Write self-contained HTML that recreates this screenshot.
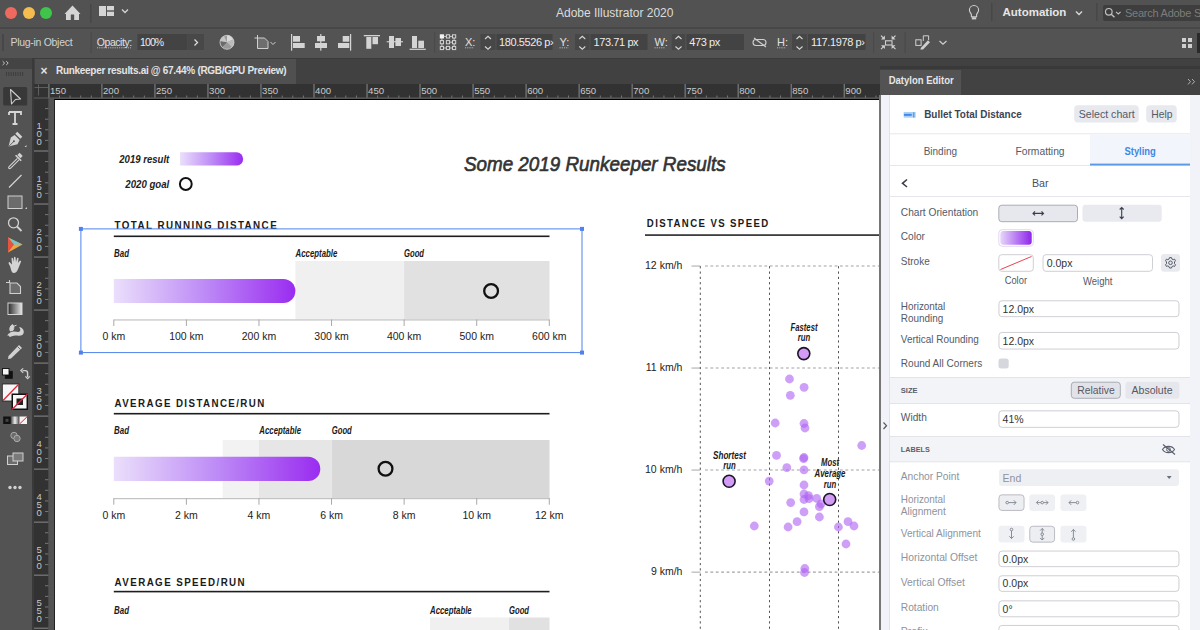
<!DOCTYPE html>
<html><head><meta charset="utf-8">
<style>
*{margin:0;padding:0;box-sizing:border-box}
html,body{width:1200px;height:630px;overflow:hidden;background:#535353;font-family:"Liberation Sans",sans-serif}
.a{position:absolute}
.t{position:absolute;white-space:nowrap;line-height:1}
svg{position:absolute;overflow:visible}
</style></head><body>
<!-- title bar -->
<div class="a" style="left:0;top:0;width:1200px;height:27px;background:#525252"></div>
<div class="a" style="left:0;top:27px;width:1200px;height:1.6px;background:#474747"></div>
<!-- control bar -->
<div class="a" style="left:0;top:28.6px;width:1200px;height:29px;background:#535353"></div>
<div class="a" style="left:0;top:57.5px;width:1200px;height:1.5px;background:#3b3b3b"></div>

<!-- ===== title bar content ===== -->
<div class="a" style="left:5px;top:7px;width:12px;height:12px;border-radius:50%;background:#ee6a5f"></div>
<div class="a" style="left:22.5px;top:7px;width:12px;height:12px;border-radius:50%;background:#f5bd4f"></div>
<div class="a" style="left:40px;top:7px;width:12px;height:12px;border-radius:50%;background:#3fc54a"></div>
<svg style="left:0;top:0" width="1200" height="28">
 <path d="M64.5 14 L72.5 5.5 L80.5 14 L79 14 L79 20 L74.2 20 L74.2 14.5 L70.8 14.5 L70.8 20 L66 20 L66 14 Z" fill="#d4d4d4"/>
 <rect x="90" y="4" width="1.5" height="19" fill="#474747"/>
 <rect x="99" y="6" width="7" height="10" fill="#d4d4d4"/>
 <rect x="107" y="6" width="7" height="4.3" fill="#d4d4d4"/>
 <rect x="107" y="11.7" width="7" height="4.3" fill="#d4d4d4"/>
 <path d="M122 9.5 L125 12.5 L128 9.5" stroke="#d4d4d4" stroke-width="1.3" fill="none"/>
 <path d="M974 5.5 a4.6 4.6 0 0 1 4.6 4.6 c0 2 -1.6 3 -2 4.6 v2 h-5.2 v-2 c-0.4 -1.6 -2 -2.6 -2 -4.6 a4.6 4.6 0 0 1 4.6 -4.6z" stroke="#cfcfcf" stroke-width="1.1" fill="none"/>
 <rect x="971.8" y="17.2" width="4.4" height="2.2" fill="#cfcfcf"/>
 <rect x="991" y="3" width="1.5" height="18" fill="#474747"/>
 <path d="M1076 11.5 L1079 14.5 L1082 11.5" stroke="#d8d8d8" stroke-width="1.4" fill="none"/>
 <rect x="1096" y="3" width="1.5" height="18" fill="#474747"/>
 <rect x="1103" y="5" width="100" height="16" rx="2" fill="#3e3e3e"/>
 <circle cx="1108.8" cy="11.8" r="3.3" stroke="#c0c0c0" stroke-width="1.2" fill="none"/>
 <path d="M1111.2 14.2 L1114.5 17.3" stroke="#c0c0c0" stroke-width="1.4"/>
 <path d="M1116 11.8 L1118.3 14 L1120.6 11.8" stroke="#c0c0c0" stroke-width="1.1" fill="none"/>
</svg>
<div class="t" style="left:556px;top:7px;font-size:12px;color:#dcdcdc">Adobe Illustrator 2020</div>
<div class="t" style="left:1002.5px;top:6.5px;font-size:11.5px;font-weight:bold;color:#e6e6e6">Automation</div>
<div class="t" style="left:1125px;top:7.5px;font-size:11px;color:#7d7d7d;letter-spacing:-0.25px">Search Adobe Stock</div>

<!-- ===== control bar content ===== -->
<svg style="left:0;top:28px" width="1200" height="30">
 <rect x="2" y="6" width="2" height="17" fill="#474747"/>
 <rect x="90.5" y="4" width="1.2" height="21" fill="#4a4a4a"/>
 <path d="M97 19.8 H131" stroke="#bdbdbd" stroke-width="0.9" stroke-dasharray="1.2 1"/>
 <rect x="137.5" y="6" width="50" height="16" fill="#434343"/>
 <rect x="188" y="6" width="16" height="16" fill="#484848"/>
 <path d="M194.5 11.5 L197.5 14.5 L194.5 17.5" stroke="#dcdcdc" stroke-width="1.3" fill="none"/>
 
 <circle cx="227" cy="14.3" r="7" fill="#9a9a9a"/>
 <path d="M227 14.3 L227 7.3 A7 7 0 0 1 233.3 11.5 Z" fill="#d8d8d8"/>
 <path d="M227 14.3 L233.3 11.5 A7 7 0 0 1 232 19.3 Z" fill="#bcbcbc"/>
 <path d="M227 14.3 L222 19.3 A7 7 0 0 1 220.2 13 Z" fill="#6a6a6a"/>
 <path d="M227 14.3 L220.2 13 A7 7 0 0 1 224 8 Z" fill="#c4c4c4"/>
 <circle cx="227" cy="14.3" r="7" fill="none" stroke="#cfcfcf" stroke-width="0.8"/>
 
 <path d="M257.5 10 H264.5 L268 13.5 V20.5 H257.5 Z" fill="#6e6e6e" stroke="#d0d0d0" stroke-width="1"/>
 <path d="M254.5 10 H257.5 M257.5 7 V10" stroke="#d0d0d0" stroke-width="1"/>
 <path d="M270.5 14 L273 16.5 L275.5 14" stroke="#d0d0d0" stroke-width="1" fill="none"/>
 
 <g fill="#d4d4d4">
 <rect x="291" y="6" width="1.2" height="16.7"/><rect x="293" y="8" width="7" height="5.7"/><rect x="293" y="15" width="11.7" height="5"/>
 <rect x="320.2" y="6" width="1.2" height="16.7"/><rect x="317" y="8" width="8" height="5.3"/><rect x="315" y="15" width="12" height="5"/>
 <rect x="350" y="6" width="1.2" height="16.7"/><rect x="342.7" y="8" width="6.6" height="5.7"/><rect x="338" y="15" width="11.3" height="5"/>
 <rect x="363.8" y="7" width="16.2" height="1.3"/><rect x="366.3" y="9" width="5" height="11.8"/><rect x="372.5" y="9" width="5.5" height="7.2"/>
 <rect x="386.7" y="13.2" width="16.3" height="1.1"/><rect x="389" y="8" width="5" height="12"/><rect x="395.4" y="10" width="5.6" height="8"/>
 <rect x="409.6" y="20.7" width="16.2" height="1.2"/><rect x="412" y="8" width="5" height="12"/><rect x="418.3" y="12.7" width="5.7" height="7.3"/>
 </g>
 <rect x="434" y="4" width="1.2" height="21" fill="#4a4a4a"/>
 <rect x="439.8" y="6.3" width="4.2" height="4.2" fill="#f2f2f2"/><rect x="446.4" y="6.8" width="3.2" height="3.2" fill="none" stroke="#d4d4d4" stroke-width="1"/><rect x="452.5" y="6.8" width="3.2" height="3.2" fill="none" stroke="#d4d4d4" stroke-width="1"/><rect x="440.3" y="12.6" width="3.2" height="3.2" fill="none" stroke="#d4d4d4" stroke-width="1"/><rect x="446.4" y="12.6" width="3.2" height="3.2" fill="none" stroke="#d4d4d4" stroke-width="1"/><rect x="452.5" y="12.6" width="3.2" height="3.2" fill="none" stroke="#d4d4d4" stroke-width="1"/><rect x="440.3" y="18.4" width="3.2" height="3.2" fill="none" stroke="#d4d4d4" stroke-width="1"/><rect x="446.4" y="18.4" width="3.2" height="3.2" fill="none" stroke="#d4d4d4" stroke-width="1"/><rect x="452.5" y="18.4" width="3.2" height="3.2" fill="none" stroke="#d4d4d4" stroke-width="1"/><path d="M443.5 8.4 H446.4 M449.6 8.4 H452.5 M449.6 14.2 H452.5 M443.5 20 H446.4 M449.6 20 H452.5 M441.9 10 V12.6 M441.9 15.8 V18.4 M454.1 10 V12.6 M454.1 15.8 V18.4" stroke="#d4d4d4" stroke-width="0.9"/>
 <path d="M465 19.8 H474 M559.5 19.8 H568.5 M654.5 19.8 H665.5 M777 19.8 H786" stroke="#bdbdbd" stroke-width="0.9" stroke-dasharray="1.2 1"/>
 <rect x="480.5" y="6" width="15" height="16" fill="#474747"/>
 <rect x="496.5" y="6" width="56" height="16" fill="#434343"/>
 <rect x="575" y="6" width="14.5" height="16" fill="#474747"/>
 <rect x="590.5" y="6" width="57" height="16" fill="#434343"/>
 <rect x="671.7" y="6" width="13.5" height="16" fill="#474747"/>
 <rect x="686.5" y="6" width="57.5" height="16" fill="#434343"/>
 <rect x="792" y="6" width="15" height="16" fill="#474747"/>
 <rect x="808" y="6" width="57.5" height="16" fill="#434343"/>
 <g stroke="#d6d6d6" stroke-width="1.1" fill="none">
  <path d="M485 11 L488 8.3 L491 11 M485 18.5 L488 21.2 L491 18.5"/>
  <path d="M579.3 11 L582.3 8.3 L585.3 11 M579.3 18.5 L582.3 21.2 L585.3 18.5"/>
  <path d="M675.5 11 L678.5 8.3 L681.5 11 M675.5 18.5 L678.5 21.2 L681.5 18.5"/>
  <path d="M796.5 11 L799.5 8.3 L802.5 11 M796.5 18.5 L799.5 21.2 L802.5 18.5"/>
 </g>
 <g stroke="#cfcfcf" stroke-width="1.1" fill="none">
  <path d="M757 11.5 h6 a3 3 0 0 1 0 6 h-1.5 M762 17.5 h-6 a3 3 0 0 1 0 -6 h1.5"/>
  <path d="M754 10 L766 19"/>
 </g>
 <rect x="873" y="4" width="1.2" height="21" fill="#4a4a4a"/>
 <rect x="885.5" y="12.8" width="6.5" height="4.2" fill="none" stroke="#d0d0d0" stroke-width="1.1"/>
 <g fill="#d0d0d0">
  <path d="M884.9 11.5 L884.9 7.6 L881 11.5 Z M891.6 11.5 L891.6 7.6 L895.5 11.5 Z"/>
  <path d="M884.9 17.2 L881 17.2 L884.9 21.1 Z M891.6 17.2 L895.5 17.2 L891.6 21.1 Z"/>
 </g>
 <path d="M881 7.6 L883.5 10.1 M895.5 7.6 L893 10.1 M881 21.1 L883.5 18.6 M895.5 21.1 L893 18.6" stroke="#d0d0d0" stroke-width="1.2"/>
 <rect x="904.5" y="4" width="1.2" height="21" fill="#4a4a4a"/>
 <g stroke="#d0d0d0" stroke-width="1" fill="none">
  <rect x="915.8" y="11.8" width="5.3" height="5.6"/>
  <path d="M923.3 13 V7.8 H928.6 V12"/>
 </g>
 <path d="M921 19.8 L928 12.3 L930 14.3 L923 21.5 L920.3 21.6 Z" fill="#d0d0d0"/>
 <path d="M939.5 13 L943 16.2 L946.5 13" stroke="#d0d0d0" stroke-width="1.2" fill="none"/>
 <g fill="#cfcfcf"><rect x="1182" y="10" width="4" height="4"/><rect x="1188" y="10" width="4" height="4"/><rect x="1182" y="16" width="4" height="4"/><rect x="1188" y="16" width="4" height="4"/></g>
 <rect x="1197" y="5" width="3" height="20" fill="#2a2a2a"/>
</svg>
<div class="t" style="left:10.5px;top:36.5px;font-size:10.5px;color:#d2d2d2;letter-spacing:-0.3px">Plug-in Object</div>
<div class="t" style="left:96.8px;top:36.5px;font-size:10.5px;color:#e0e0e0;letter-spacing:-0.45px">Opacity:</div>
<div class="t" style="left:140px;top:37px;font-size:10.5px;color:#ececec;letter-spacing:-0.9px">100%</div>
<div class="t" style="left:465px;top:37px;font-size:11px;color:#e0e0e0">X:</div>
<div class="t" style="left:559.5px;top:37px;font-size:11px;color:#e0e0e0">Y:</div>
<div class="t" style="left:654.5px;top:37px;font-size:11px;color:#e0e0e0">W:</div>
<div class="t" style="left:777px;top:37px;font-size:11px;color:#e0e0e0">H:</div>
<div class="t" style="left:499px;top:37px;font-size:11px;color:#ececec;letter-spacing:-0.4px">180.5526 p›</div>
<div class="t" style="left:593.5px;top:37px;font-size:11px;color:#ececec;letter-spacing:-0.4px">173.71 px</div>
<div class="t" style="left:689.3px;top:37px;font-size:11px;color:#ececec;letter-spacing:-0.4px">473 px</div>
<div class="t" style="left:811px;top:37px;font-size:11px;color:#ececec;letter-spacing:-0.4px">117.1978 p›</div>

<!-- tab bar -->
<div class="a" style="left:34px;top:59px;width:1166px;height:25px;background:#414141"></div>
<div class="a" style="left:35px;top:59px;width:261px;height:25px;background:#505050"></div>
<!-- toolbar -->
<div class="a" style="left:0;top:58px;width:32px;height:572px;background:#535353"></div>
<div class="a" style="left:0;top:58px;width:32px;height:11px;background:#444"></div>
<div class="a" style="left:32px;top:58px;width:2px;height:572px;background:#3a3a3a"></div>

<div class="t" style="left:40.5px;top:64.5px;font-size:12px;font-weight:bold;color:#e0e0e0">×</div>
<div class="t" style="left:56px;top:66px;font-size:10px;font-weight:bold;color:#e4e4e4;letter-spacing:-0.3px">Runkeeper results.ai @ 67.44% (RGB/GPU Preview)</div>

<!-- toolbar icons -->
<svg style="left:0;top:0" width="34" height="630">
 <path d="M2.6 61.2 L4.6 63.1 L2.6 65 M6.2 61.2 L8.2 63.1 L6.2 65" stroke="#c4c4c4" stroke-width="1" fill="none"/>
 <g fill="#3e3e3e"><rect x="6" y="72" width="1" height="4"/><rect x="8.3" y="72" width="1" height="4"/><rect x="10.6" y="72" width="1" height="4"/><rect x="12.9" y="72" width="1" height="4"/><rect x="15.2" y="72" width="1" height="4"/><rect x="17.5" y="72" width="1" height="4"/><rect x="19.8" y="72" width="1" height="4"/><rect x="22.1" y="72" width="1" height="4"/></g>
 <rect x="3.2" y="87" width="24" height="18.5" rx="1.5" fill="#383838"/>
 <path d="M10.5 89.5 L20.5 99 L15.5 99.5 L11.5 104 Z" stroke="#cfcfcf" stroke-width="1.1" fill="none" stroke-linejoin="round"/>
 <path d="M9 112 H21 V115 M9 112 V115 M15 112 V124 M12.5 124 H17.5" stroke="#d6d6d6" stroke-width="1.8" fill="none"/>
 <path d="M17.3 131.8 L22.3 136.8 L20.3 138.8 L15.3 133.8 Z" fill="#d2d2d2"/>
 <path d="M14.6 135 L19.6 140 L17.5 144.3 L8.6 146.6 L10.8 137.6 Z" fill="#d2d2d2"/>
 <path d="M8.9 146.3 L13.2 142" stroke="#535353" stroke-width="0.9"/><circle cx="13.9" cy="141.3" r="1" fill="#535353"/>
 <path d="M24.5 147 L26.5 145 L26.5 147 Z" fill="#cfcfcf"/>
 <path d="M19.6 152.8 L22.7 155.9 L20.4 158.2 L17.3 155.1 Z" fill="#d2d2d2"/>
 <path d="M15.6 155.2 L21.2 160.8" stroke="#d2d2d2" stroke-width="1.6"/>
 <path d="M17.4 158.3 L9.6 166.1 C8.6 167.1 8.4 168 8.9 168.4 C9.4 168.9 10.3 168.6 11.2 167.7 L19 159.9" stroke="#d2d2d2" stroke-width="1.1" fill="none"/>
 <path d="M9 187.5 L21.5 175" stroke="#d2d2d2" stroke-width="1.3"/>
 <rect x="8" y="196" width="14" height="12.5" fill="#6c6c6c" stroke="#d0d0d0" stroke-width="1"/>
 <path d="M25 209 L27 207 L27 209 Z" fill="#cfcfcf"/>
 <circle cx="13.5" cy="222.8" r="5" stroke="#d2d2d2" stroke-width="1.3" fill="none"/>
 <path d="M17 226.5 L21.5 231" stroke="#d2d2d2" stroke-width="1.8"/>
 <path d="M8 237.5 L22.5 244.5 L8 252.5 Z" fill="#f0a640"/>
 <path d="M8 237.5 L22.5 244.5 L14 244.5 Z" fill="#6cc6d6"/>
 <path d="M8 237.5 L14 244.5 L8 252.5 Z" fill="#e45440"/>
 <path d="M10 266 C8 263 8.5 262 9.5 262 L12 264.5 L11.5 258.5 C11.5 257.5 13 257.5 13 258.5 L13.5 262 L14 257.5 C14 256.5 15.5 256.5 15.5 257.5 L16 262 L17 258.5 C17.2 257.5 18.7 257.7 18.5 258.8 L18 263 L19.5 261 C20.2 260.2 21.5 260.8 21 261.8 L18.5 268 C17.5 271 16 273 13.5 273 C11.5 273 10.8 268.5 10 266 Z" fill="#d4d4d4"/>
 <path d="M6 282.5 H10 M9.5 280 V283 M10 283 H17 L20.5 286.5 V293.5 H10 Z" stroke="#d0d0d0" stroke-width="1.1" fill="#6c6c6c"/>
 <defs><linearGradient id="tg" x1="0" x2="1"><stop offset="0" stop-color="#2a2a2a"/><stop offset="1" stop-color="#e8e8e8"/></linearGradient></defs>
 <rect x="8" y="303" width="14" height="11.5" fill="url(#tg)" stroke="#d6d6d6" stroke-width="1"/>
 <path d="M8 335 C9.5 332.5 11.5 331.5 14 331.5 C16.5 331.5 18.3 332.8 19.8 331.3 C20.8 330.3 20.2 328.5 19 327.3 C21.5 327.2 24 329.3 23.8 332.2 C23.5 335 20.8 336.3 17.3 335.6 C14.8 335.1 12.3 335.6 9.8 337 Z" fill="#d2d2d2"/>
 <path d="M10.2 331 C9.2 328.5 10.3 325.6 12.6 324.6 C13.9 325.8 14.4 328 13 330.3 Z M13 326.5 L16.5 325.2 M7.8 335.5 L9 333.5" fill="#d2d2d2" stroke="#d2d2d2" stroke-width="1"/>
 <path d="M19 345 L22 348 L11 358.5 L8 359 L8.5 356 Z" fill="#d2d2d2"/>
 <path d="M17.5 346.5 L20.5 349.5" stroke="#535353" stroke-width="0.8"/>
 <rect x="5.3" y="371.3" width="7" height="7" fill="#111" stroke="#111" stroke-width="0.8"/>
 <rect x="2.5" y="368.5" width="6.5" height="6.5" fill="#f4f4f4" stroke="#111" stroke-width="0.9"/>
 <path d="M22.5 370.6 H25.3 Q27.6 370.6 27.6 372.9 V377" stroke="#d0d0d0" stroke-width="1.4" fill="none"/>
 <path d="M23.2 368.4 L20.8 370.6 L23.2 372.8 M25.4 376.3 L27.6 378.7 L29.8 376.3" stroke="#d0d0d0" stroke-width="1.2" fill="none"/>
 <rect x="2.3" y="384" width="16.5" height="17" fill="#f6f6f6" stroke="#222" stroke-width="0.8"/>
 <path d="M3 400.5 L18.5 384.5" stroke="#e2233a" stroke-width="1.3"/>
 <rect x="11.5" y="393.5" width="16.5" height="16.5" fill="#111"/>
 <rect x="13" y="395" width="13.5" height="13.5" fill="#f6f6f6"/>
 <rect x="16.5" y="398.5" width="6.5" height="6.5" fill="#222"/>
 <path d="M12 409.5 L27.5 394" stroke="#e2233a" stroke-width="1.3"/>
 <rect x="3.2" y="416.5" width="7.5" height="7.5" fill="#111"/><rect x="5.5" y="418.8" width="3" height="3" fill="#444"/>
 <defs><linearGradient id="tg2" x1="0" x2="1"><stop offset="0" stop-color="#555"/><stop offset="0.5" stop-color="#eee"/><stop offset="1" stop-color="#666"/></linearGradient></defs>
 <rect x="11.2" y="416.5" width="7.5" height="7.5" fill="url(#tg2)"/>
 <rect x="19.5" y="416.5" width="7.5" height="7.5" fill="#f4f4f4"/>
 <path d="M19.8 423.8 L27 416.8" stroke="#e2233a" stroke-width="1"/>
 <circle cx="14" cy="435.5" r="3.2" stroke="#aaa" stroke-width="1" fill="#6a6a6a"/><circle cx="17" cy="438.5" r="3.2" stroke="#aaa" stroke-width="1" fill="#777"/>
 <rect x="7.5" y="456" width="10" height="8.5" fill="#6c6c6c" stroke="#d0d0d0" stroke-width="1"/>
 <rect x="13" y="453" width="10" height="8" fill="#7a7a7a" stroke="#d0d0d0" stroke-width="1"/>
 <circle cx="10" cy="487.5" r="1.7" fill="#d0d0d0"/><circle cx="15" cy="487.5" r="1.7" fill="#d0d0d0"/><circle cx="20" cy="487.5" r="1.7" fill="#d0d0d0"/>
</svg>

<!-- rulers -->
<div class="a" style="left:34px;top:84px;width:846px;height:14px;background:#323232"></div>
<div class="a" style="left:34px;top:84px;width:15px;height:546px;background:#323232"></div>
<!-- ruler content -->
<svg style="left:0;top:0" width="1200" height="630"><rect x="48.40" y="84" width="1" height="14" fill="#8a8a8a"/><rect x="59.00" y="95.5" width="1" height="2.5" fill="#777"/><rect x="69.61" y="95.5" width="1" height="2.5" fill="#777"/><rect x="80.21" y="95.5" width="1" height="2.5" fill="#777"/><rect x="90.82" y="95.5" width="1" height="2.5" fill="#777"/><rect x="101.42" y="84" width="1" height="14" fill="#8a8a8a"/><rect x="112.02" y="95.5" width="1" height="2.5" fill="#777"/><rect x="122.63" y="95.5" width="1" height="2.5" fill="#777"/><rect x="133.23" y="95.5" width="1" height="2.5" fill="#777"/><rect x="143.84" y="95.5" width="1" height="2.5" fill="#777"/><rect x="154.44" y="84" width="1" height="14" fill="#8a8a8a"/><rect x="165.04" y="95.5" width="1" height="2.5" fill="#777"/><rect x="175.65" y="95.5" width="1" height="2.5" fill="#777"/><rect x="186.25" y="95.5" width="1" height="2.5" fill="#777"/><rect x="196.86" y="95.5" width="1" height="2.5" fill="#777"/><rect x="207.46" y="84" width="1" height="14" fill="#8a8a8a"/><rect x="218.06" y="95.5" width="1" height="2.5" fill="#777"/><rect x="228.67" y="95.5" width="1" height="2.5" fill="#777"/><rect x="239.27" y="95.5" width="1" height="2.5" fill="#777"/><rect x="249.88" y="95.5" width="1" height="2.5" fill="#777"/><rect x="260.48" y="84" width="1" height="14" fill="#8a8a8a"/><rect x="271.08" y="95.5" width="1" height="2.5" fill="#777"/><rect x="281.69" y="95.5" width="1" height="2.5" fill="#777"/><rect x="292.29" y="95.5" width="1" height="2.5" fill="#777"/><rect x="302.90" y="95.5" width="1" height="2.5" fill="#777"/><rect x="313.50" y="84" width="1" height="14" fill="#8a8a8a"/><rect x="324.10" y="95.5" width="1" height="2.5" fill="#777"/><rect x="334.71" y="95.5" width="1" height="2.5" fill="#777"/><rect x="345.31" y="95.5" width="1" height="2.5" fill="#777"/><rect x="355.92" y="95.5" width="1" height="2.5" fill="#777"/><rect x="366.52" y="84" width="1" height="14" fill="#8a8a8a"/><rect x="377.12" y="95.5" width="1" height="2.5" fill="#777"/><rect x="387.73" y="95.5" width="1" height="2.5" fill="#777"/><rect x="398.33" y="95.5" width="1" height="2.5" fill="#777"/><rect x="408.94" y="95.5" width="1" height="2.5" fill="#777"/><rect x="419.54" y="84" width="1" height="14" fill="#8a8a8a"/><rect x="430.14" y="95.5" width="1" height="2.5" fill="#777"/><rect x="440.75" y="95.5" width="1" height="2.5" fill="#777"/><rect x="451.35" y="95.5" width="1" height="2.5" fill="#777"/><rect x="461.96" y="95.5" width="1" height="2.5" fill="#777"/><rect x="472.56" y="84" width="1" height="14" fill="#8a8a8a"/><rect x="483.16" y="95.5" width="1" height="2.5" fill="#777"/><rect x="493.77" y="95.5" width="1" height="2.5" fill="#777"/><rect x="504.37" y="95.5" width="1" height="2.5" fill="#777"/><rect x="514.98" y="95.5" width="1" height="2.5" fill="#777"/><rect x="525.58" y="84" width="1" height="14" fill="#8a8a8a"/><rect x="536.18" y="95.5" width="1" height="2.5" fill="#777"/><rect x="546.79" y="95.5" width="1" height="2.5" fill="#777"/><rect x="557.39" y="95.5" width="1" height="2.5" fill="#777"/><rect x="568.00" y="95.5" width="1" height="2.5" fill="#777"/><rect x="578.60" y="84" width="1" height="14" fill="#8a8a8a"/><rect x="589.20" y="95.5" width="1" height="2.5" fill="#777"/><rect x="599.81" y="95.5" width="1" height="2.5" fill="#777"/><rect x="610.41" y="95.5" width="1" height="2.5" fill="#777"/><rect x="621.02" y="95.5" width="1" height="2.5" fill="#777"/><rect x="631.62" y="84" width="1" height="14" fill="#8a8a8a"/><rect x="642.22" y="95.5" width="1" height="2.5" fill="#777"/><rect x="652.83" y="95.5" width="1" height="2.5" fill="#777"/><rect x="663.43" y="95.5" width="1" height="2.5" fill="#777"/><rect x="674.04" y="95.5" width="1" height="2.5" fill="#777"/><rect x="684.64" y="84" width="1" height="14" fill="#8a8a8a"/><rect x="695.24" y="95.5" width="1" height="2.5" fill="#777"/><rect x="705.85" y="95.5" width="1" height="2.5" fill="#777"/><rect x="716.45" y="95.5" width="1" height="2.5" fill="#777"/><rect x="727.06" y="95.5" width="1" height="2.5" fill="#777"/><rect x="737.66" y="84" width="1" height="14" fill="#8a8a8a"/><rect x="748.26" y="95.5" width="1" height="2.5" fill="#777"/><rect x="758.87" y="95.5" width="1" height="2.5" fill="#777"/><rect x="769.47" y="95.5" width="1" height="2.5" fill="#777"/><rect x="780.08" y="95.5" width="1" height="2.5" fill="#777"/><rect x="790.68" y="84" width="1" height="14" fill="#8a8a8a"/><rect x="801.28" y="95.5" width="1" height="2.5" fill="#777"/><rect x="811.89" y="95.5" width="1" height="2.5" fill="#777"/><rect x="822.49" y="95.5" width="1" height="2.5" fill="#777"/><rect x="833.10" y="95.5" width="1" height="2.5" fill="#777"/><rect x="843.70" y="84" width="1" height="14" fill="#8a8a8a"/><rect x="854.30" y="95.5" width="1" height="2.5" fill="#777"/><rect x="864.91" y="95.5" width="1" height="2.5" fill="#777"/><rect x="875.51" y="95.5" width="1" height="2.5" fill="#777"/><rect x="45" y="108.08" width="3.5" height="1" fill="#777"/><rect x="45" y="118.69" width="3.5" height="1" fill="#777"/><rect x="45" y="129.29" width="3.5" height="1" fill="#777"/><rect x="45" y="139.90" width="3.5" height="1" fill="#777"/><rect x="34" y="150.50" width="14.5" height="1" fill="#8a8a8a"/><rect x="45" y="161.10" width="3.5" height="1" fill="#777"/><rect x="45" y="171.71" width="3.5" height="1" fill="#777"/><rect x="45" y="182.31" width="3.5" height="1" fill="#777"/><rect x="45" y="192.92" width="3.5" height="1" fill="#777"/><rect x="34" y="203.52" width="14.5" height="1" fill="#8a8a8a"/><rect x="45" y="214.12" width="3.5" height="1" fill="#777"/><rect x="45" y="224.73" width="3.5" height="1" fill="#777"/><rect x="45" y="235.33" width="3.5" height="1" fill="#777"/><rect x="45" y="245.94" width="3.5" height="1" fill="#777"/><rect x="34" y="256.54" width="14.5" height="1" fill="#8a8a8a"/><rect x="45" y="267.14" width="3.5" height="1" fill="#777"/><rect x="45" y="277.75" width="3.5" height="1" fill="#777"/><rect x="45" y="288.35" width="3.5" height="1" fill="#777"/><rect x="45" y="298.96" width="3.5" height="1" fill="#777"/><rect x="34" y="309.56" width="14.5" height="1" fill="#8a8a8a"/><rect x="45" y="320.16" width="3.5" height="1" fill="#777"/><rect x="45" y="330.77" width="3.5" height="1" fill="#777"/><rect x="45" y="341.37" width="3.5" height="1" fill="#777"/><rect x="45" y="351.98" width="3.5" height="1" fill="#777"/><rect x="34" y="362.58" width="14.5" height="1" fill="#8a8a8a"/><rect x="45" y="373.18" width="3.5" height="1" fill="#777"/><rect x="45" y="383.79" width="3.5" height="1" fill="#777"/><rect x="45" y="394.39" width="3.5" height="1" fill="#777"/><rect x="45" y="405.00" width="3.5" height="1" fill="#777"/><rect x="34" y="415.60" width="14.5" height="1" fill="#8a8a8a"/><rect x="45" y="426.20" width="3.5" height="1" fill="#777"/><rect x="45" y="436.81" width="3.5" height="1" fill="#777"/><rect x="45" y="447.41" width="3.5" height="1" fill="#777"/><rect x="45" y="458.02" width="3.5" height="1" fill="#777"/><rect x="34" y="468.62" width="14.5" height="1" fill="#8a8a8a"/><rect x="45" y="479.22" width="3.5" height="1" fill="#777"/><rect x="45" y="489.83" width="3.5" height="1" fill="#777"/><rect x="45" y="500.43" width="3.5" height="1" fill="#777"/><rect x="45" y="511.04" width="3.5" height="1" fill="#777"/><rect x="34" y="521.64" width="14.5" height="1" fill="#8a8a8a"/><rect x="45" y="532.24" width="3.5" height="1" fill="#777"/><rect x="45" y="542.85" width="3.5" height="1" fill="#777"/><rect x="45" y="553.45" width="3.5" height="1" fill="#777"/><rect x="45" y="564.06" width="3.5" height="1" fill="#777"/><rect x="34" y="574.66" width="14.5" height="1" fill="#8a8a8a"/><rect x="45" y="585.26" width="3.5" height="1" fill="#777"/><rect x="45" y="595.87" width="3.5" height="1" fill="#777"/><rect x="45" y="606.47" width="3.5" height="1" fill="#777"/><rect x="45" y="617.08" width="3.5" height="1" fill="#777"/><rect x="34" y="627.68" width="14.5" height="1" fill="#8a8a8a"/><rect x="48.5" y="98" width="1" height="532" fill="#5e5e5e"/><rect x="34" y="97.5" width="846" height="1" fill="#5e5e5e"/></svg><div class="t" style="left:50.00px;top:86.4px;font-size:9.6px;color:#cacaca">150</div><div class="t" style="left:103.02px;top:86.4px;font-size:9.6px;color:#cacaca">200</div><div class="t" style="left:156.04px;top:86.4px;font-size:9.6px;color:#cacaca">250</div><div class="t" style="left:209.06px;top:86.4px;font-size:9.6px;color:#cacaca">300</div><div class="t" style="left:262.08px;top:86.4px;font-size:9.6px;color:#cacaca">350</div><div class="t" style="left:315.10px;top:86.4px;font-size:9.6px;color:#cacaca">400</div><div class="t" style="left:368.12px;top:86.4px;font-size:9.6px;color:#cacaca">450</div><div class="t" style="left:421.14px;top:86.4px;font-size:9.6px;color:#cacaca">500</div><div class="t" style="left:474.16px;top:86.4px;font-size:9.6px;color:#cacaca">550</div><div class="t" style="left:527.18px;top:86.4px;font-size:9.6px;color:#cacaca">600</div><div class="t" style="left:580.20px;top:86.4px;font-size:9.6px;color:#cacaca">650</div><div class="t" style="left:633.22px;top:86.4px;font-size:9.6px;color:#cacaca">700</div><div class="t" style="left:686.24px;top:86.4px;font-size:9.6px;color:#cacaca">750</div><div class="t" style="left:739.26px;top:86.4px;font-size:9.6px;color:#cacaca">800</div><div class="t" style="left:792.28px;top:86.4px;font-size:9.6px;color:#cacaca">850</div><div class="t" style="left:845.30px;top:86.4px;font-size:9.6px;color:#cacaca">900</div>
<div class="t" style="left:36.6px;top:120.70px;font-size:9.5px;color:#c8c8c8">1</div><div class="t" style="left:36.6px;top:128.90px;font-size:9.5px;color:#c8c8c8">0</div><div class="t" style="left:36.6px;top:137.10px;font-size:9.5px;color:#c8c8c8">0</div><div class="t" style="left:36.6px;top:173.72px;font-size:9.5px;color:#c8c8c8">1</div><div class="t" style="left:36.6px;top:181.92px;font-size:9.5px;color:#c8c8c8">5</div><div class="t" style="left:36.6px;top:190.12px;font-size:9.5px;color:#c8c8c8">0</div><div class="t" style="left:36.6px;top:226.74px;font-size:9.5px;color:#c8c8c8">2</div><div class="t" style="left:36.6px;top:234.94px;font-size:9.5px;color:#c8c8c8">0</div><div class="t" style="left:36.6px;top:243.14px;font-size:9.5px;color:#c8c8c8">0</div><div class="t" style="left:36.6px;top:279.76px;font-size:9.5px;color:#c8c8c8">2</div><div class="t" style="left:36.6px;top:287.96px;font-size:9.5px;color:#c8c8c8">5</div><div class="t" style="left:36.6px;top:296.16px;font-size:9.5px;color:#c8c8c8">0</div><div class="t" style="left:36.6px;top:332.78px;font-size:9.5px;color:#c8c8c8">3</div><div class="t" style="left:36.6px;top:340.98px;font-size:9.5px;color:#c8c8c8">0</div><div class="t" style="left:36.6px;top:349.18px;font-size:9.5px;color:#c8c8c8">0</div><div class="t" style="left:36.6px;top:385.80px;font-size:9.5px;color:#c8c8c8">3</div><div class="t" style="left:36.6px;top:394.00px;font-size:9.5px;color:#c8c8c8">5</div><div class="t" style="left:36.6px;top:402.20px;font-size:9.5px;color:#c8c8c8">0</div><div class="t" style="left:36.6px;top:438.82px;font-size:9.5px;color:#c8c8c8">4</div><div class="t" style="left:36.6px;top:447.02px;font-size:9.5px;color:#c8c8c8">0</div><div class="t" style="left:36.6px;top:455.22px;font-size:9.5px;color:#c8c8c8">0</div><div class="t" style="left:36.6px;top:491.84px;font-size:9.5px;color:#c8c8c8">4</div><div class="t" style="left:36.6px;top:500.04px;font-size:9.5px;color:#c8c8c8">5</div><div class="t" style="left:36.6px;top:508.24px;font-size:9.5px;color:#c8c8c8">0</div><div class="t" style="left:36.6px;top:544.86px;font-size:9.5px;color:#c8c8c8">5</div><div class="t" style="left:36.6px;top:553.06px;font-size:9.5px;color:#c8c8c8">0</div><div class="t" style="left:36.6px;top:561.26px;font-size:9.5px;color:#c8c8c8">0</div><div class="t" style="left:36.6px;top:597.88px;font-size:9.5px;color:#c8c8c8">5</div><div class="t" style="left:36.6px;top:606.08px;font-size:9.5px;color:#c8c8c8">5</div><div class="t" style="left:36.6px;top:614.28px;font-size:9.5px;color:#c8c8c8">0</div><div class="t" style="left:36.6px;top:650.90px;font-size:9.5px;color:#c8c8c8">6</div><div class="t" style="left:36.6px;top:659.10px;font-size:9.5px;color:#c8c8c8">0</div><div class="t" style="left:36.6px;top:667.30px;font-size:9.5px;color:#c8c8c8">0</div>
<svg style="left:0;top:0" width="60" height="100"><rect x="38.2" y="84.5" width="0.8" height="11" fill="#6a6a6a"/><rect x="34.5" y="87.2" width="13.5" height="0.8" fill="#6a6a6a"/></svg>
<!-- canvas -->
<div class="a" style="left:49px;top:98px;width:831px;height:532px;background:#535353"></div>
<div class="a" style="left:54px;top:99px;width:826px;height:531px;background:#fff;border-top:1px solid #000;border-left:1px solid #222"></div>
<!-- artboard content -->
<svg style="left:0;top:0" width="1200" height="630" font-family="Liberation Sans"><defs>
<linearGradient id="bg1" x1="0" x2="1"><stop offset="0" stop-color="#ebdffb"/><stop offset="0.5" stop-color="#bd8bf6"/><stop offset="1" stop-color="#9a2cf0"/></linearGradient>
<clipPath id="abclip"><rect x="55" y="100" width="825" height="530"/></clipPath>
</defs><g clip-path="url(#abclip)"><text x="119.3" y="163.3" font-size="10.5" font-weight="bold" font-style="italic" fill="#222" text-anchor="start" textLength="50" lengthAdjust="spacingAndGlyphs">2019 result</text><path d="M180 152.3 H236.5 A6.65 6.65 0 0 1 236.5 165.6 H180 Z" fill="url(#bg1)"/><text x="125.3" y="188" font-size="10.5" font-weight="bold" font-style="italic" fill="#222" text-anchor="start" textLength="44" lengthAdjust="spacingAndGlyphs">2020 goal</text><circle cx="185.8" cy="184" r="5.9" fill="none" stroke="#111" stroke-width="2"/><text x="463.9" y="170.7" font-size="20.5" font-weight="normal" font-style="italic" fill="#333" text-anchor="start" textLength="261.8" lengthAdjust="spacingAndGlyphs" stroke="#333" stroke-width="0.65">Some 2019 Runkeeper Results</text><text x="114.5" y="228.9" font-size="11" font-weight="bold" font-style="normal" fill="#1a1a1a" text-anchor="start" textLength="163.6" lengthAdjust="spacingAndGlyphs" letter-spacing="1.6">TOTAL RUNNING DISTANCE</text><rect x="113.8" y="235.5" width="435.7" height="1.6" fill="#1e1e1e"/><text x="114" y="256.5" font-size="10.3" font-weight="bold" font-style="italic" fill="#1a1a1a" text-anchor="start" textLength="15" lengthAdjust="spacingAndGlyphs">Bad</text><text x="295.6" y="256.5" font-size="10.3" font-weight="bold" font-style="italic" fill="#1a1a1a" text-anchor="start" textLength="41.7" lengthAdjust="spacingAndGlyphs">Acceptable</text><text x="404" y="256.5" font-size="10.3" font-weight="bold" font-style="italic" fill="#1a1a1a" text-anchor="start" textLength="20" lengthAdjust="spacingAndGlyphs">Good</text><rect x="295.4" y="261" width="108.70" height="58.50" fill="#f0f0f0"/><rect x="404.1" y="261" width="145.40" height="58.50" fill="#e1e1e1"/><path d="M113.8 279 H283.40 A12.00 12.00 0 0 1 283.40 303 H113.8 Z" fill="url(#bg1)"/><circle cx="491.1" cy="291" r="6.9" fill="none" stroke="#111" stroke-width="2.3"/><rect x="113.8" y="319.40" width="435.7" height="1.1" fill="#bdbdbd"/><rect x="113.30" y="319.50" width="1" height="6.5" fill="#a8a8a8"/><text x="113.80" y="340.30" font-size="10.5" font-weight="normal" font-style="normal" fill="#222" text-anchor="middle">0 km</text><rect x="185.88" y="319.50" width="1" height="6.5" fill="#a8a8a8"/><text x="186.38" y="340.30" font-size="10.5" font-weight="normal" font-style="normal" fill="#222" text-anchor="middle">100 km</text><rect x="258.46" y="319.50" width="1" height="6.5" fill="#a8a8a8"/><text x="258.96" y="340.30" font-size="10.5" font-weight="normal" font-style="normal" fill="#222" text-anchor="middle">200 km</text><rect x="331.04" y="319.50" width="1" height="6.5" fill="#a8a8a8"/><text x="331.54" y="340.30" font-size="10.5" font-weight="normal" font-style="normal" fill="#222" text-anchor="middle">300 km</text><rect x="403.62" y="319.50" width="1" height="6.5" fill="#a8a8a8"/><text x="404.12" y="340.30" font-size="10.5" font-weight="normal" font-style="normal" fill="#222" text-anchor="middle">400 km</text><rect x="476.20" y="319.50" width="1" height="6.5" fill="#a8a8a8"/><text x="476.70" y="340.30" font-size="10.5" font-weight="normal" font-style="normal" fill="#222" text-anchor="middle">500 km</text><rect x="548.78" y="319.50" width="1" height="6.5" fill="#a8a8a8"/><text x="549.28" y="340.30" font-size="10.5" font-weight="normal" font-style="normal" fill="#222" text-anchor="middle">600 km</text><text x="114.5" y="407.1" font-size="11" font-weight="bold" font-style="normal" fill="#1a1a1a" text-anchor="start" textLength="151.2" lengthAdjust="spacingAndGlyphs" letter-spacing="1.6">AVERAGE DISTANCE/RUN</text><rect x="113.8" y="412.9" width="435.7" height="1.6" fill="#1e1e1e"/><text x="114" y="434.4" font-size="10.3" font-weight="bold" font-style="italic" fill="#1a1a1a" text-anchor="start" textLength="15" lengthAdjust="spacingAndGlyphs">Bad</text><text x="259.3" y="434.4" font-size="10.3" font-weight="bold" font-style="italic" fill="#1a1a1a" text-anchor="start" textLength="41.7" lengthAdjust="spacingAndGlyphs">Acceptable</text><text x="331.8" y="434.4" font-size="10.3" font-weight="bold" font-style="italic" fill="#1a1a1a" text-anchor="start" textLength="20" lengthAdjust="spacingAndGlyphs">Good</text><rect x="222.7" y="440" width="36.20" height="58.20" fill="#f2f2f2"/><rect x="258.9" y="440" width="72.90" height="58.20" fill="#e6e6e6"/><rect x="331.8" y="440" width="217.70" height="58.20" fill="#d8d8d8"/><path d="M113.8 456.8 H308.20 A12.10 12.10 0 0 1 308.20 481 H113.8 Z" fill="url(#bg1)"/><circle cx="385.5" cy="468.8" r="6.9" fill="none" stroke="#111" stroke-width="2.3"/><rect x="113.8" y="498.10" width="435.7" height="1.1" fill="#bdbdbd"/><rect x="113.30" y="498.20" width="1" height="6.5" fill="#a8a8a8"/><text x="113.80" y="519.00" font-size="10.5" font-weight="normal" font-style="normal" fill="#222" text-anchor="middle">0 km</text><rect x="185.88" y="498.20" width="1" height="6.5" fill="#a8a8a8"/><text x="186.38" y="519.00" font-size="10.5" font-weight="normal" font-style="normal" fill="#222" text-anchor="middle">2 km</text><rect x="258.46" y="498.20" width="1" height="6.5" fill="#a8a8a8"/><text x="258.96" y="519.00" font-size="10.5" font-weight="normal" font-style="normal" fill="#222" text-anchor="middle">4 km</text><rect x="331.04" y="498.20" width="1" height="6.5" fill="#a8a8a8"/><text x="331.54" y="519.00" font-size="10.5" font-weight="normal" font-style="normal" fill="#222" text-anchor="middle">6 km</text><rect x="403.62" y="498.20" width="1" height="6.5" fill="#a8a8a8"/><text x="404.12" y="519.00" font-size="10.5" font-weight="normal" font-style="normal" fill="#222" text-anchor="middle">8 km</text><rect x="476.20" y="498.20" width="1" height="6.5" fill="#a8a8a8"/><text x="476.70" y="519.00" font-size="10.5" font-weight="normal" font-style="normal" fill="#222" text-anchor="middle">10 km</text><rect x="548.78" y="498.20" width="1" height="6.5" fill="#a8a8a8"/><text x="549.28" y="519.00" font-size="10.5" font-weight="normal" font-style="normal" fill="#222" text-anchor="middle">12 km</text><text x="114.5" y="585.8" font-size="11" font-weight="bold" font-style="normal" fill="#1a1a1a" text-anchor="start" textLength="131.6" lengthAdjust="spacingAndGlyphs" letter-spacing="1.6">AVERAGE SPEED/RUN</text><rect x="113.8" y="590.8" width="435.7" height="1.6" fill="#1e1e1e"/><text x="114" y="614" font-size="10.3" font-weight="bold" font-style="italic" fill="#1a1a1a" text-anchor="start" textLength="15" lengthAdjust="spacingAndGlyphs">Bad</text><text x="430" y="614" font-size="10.3" font-weight="bold" font-style="italic" fill="#1a1a1a" text-anchor="start" textLength="41.7" lengthAdjust="spacingAndGlyphs">Acceptable</text><text x="509" y="614" font-size="10.3" font-weight="bold" font-style="italic" fill="#1a1a1a" text-anchor="start" textLength="20" lengthAdjust="spacingAndGlyphs">Good</text><rect x="430" y="617.5" width="79.00" height="82.50" fill="#f0f0f0"/><rect x="509" y="617.5" width="40.50" height="82.50" fill="#e1e1e1"/><text x="646.8" y="227.4" font-size="11" font-weight="bold" font-style="normal" fill="#1a1a1a" text-anchor="start" textLength="122.8" lengthAdjust="spacingAndGlyphs" letter-spacing="1.6">DISTANCE VS SPEED</text><rect x="645" y="234.2" width="240" height="1.8" fill="#3e3e3e"/><text x="682.4" y="269.3" font-size="10.5" font-weight="normal" font-style="normal" fill="#222" text-anchor="end">12 km/h</text><rect x="691.5" y="265.5" width="9" height="1.1" fill="#b0b0b0"/><path d="M705 266 H880" stroke="#a2a2a2" stroke-width="1.1" stroke-dasharray="2.8 2.6"/><text x="682.4" y="371.3" font-size="10.5" font-weight="normal" font-style="normal" fill="#222" text-anchor="end">11 km/h</text><rect x="691.5" y="367.5" width="9" height="1.1" fill="#b0b0b0"/><path d="M705 368 H880" stroke="#a2a2a2" stroke-width="1.1" stroke-dasharray="2.8 2.6"/><text x="682.4" y="473.3" font-size="10.5" font-weight="normal" font-style="normal" fill="#222" text-anchor="end">10 km/h</text><rect x="691.5" y="469.5" width="9" height="1.1" fill="#b0b0b0"/><path d="M705 470 H880" stroke="#a2a2a2" stroke-width="1.1" stroke-dasharray="2.8 2.6"/><text x="682.4" y="574.9" font-size="10.5" font-weight="normal" font-style="normal" fill="#222" text-anchor="end">9 km/h</text><rect x="691.5" y="571.6" width="9" height="1.1" fill="#b0b0b0"/><path d="M705 572.1 H880" stroke="#a2a2a2" stroke-width="1.1" stroke-dasharray="2.8 2.6"/><path d="M700.3 266.2 V630" stroke="#4a4a4a" stroke-width="0.95" stroke-dasharray="2.2 3.1"/><path d="M769.5 266.2 V630" stroke="#4a4a4a" stroke-width="0.95" stroke-dasharray="2.2 3.1"/><path d="M838.5 266.2 V630" stroke="#4a4a4a" stroke-width="0.95" stroke-dasharray="2.2 3.1"/><circle cx="789.5" cy="379" r="4.4" fill="#b064f2" fill-opacity="0.62"/><circle cx="804.1" cy="387.3" r="4.4" fill="#b064f2" fill-opacity="0.62"/><circle cx="790.3" cy="395.3" r="4.4" fill="#b064f2" fill-opacity="0.62"/><circle cx="775.2" cy="423" r="4.4" fill="#b064f2" fill-opacity="0.62"/><circle cx="804" cy="423.5" r="4.4" fill="#b064f2" fill-opacity="0.62"/><circle cx="805" cy="428" r="4.4" fill="#b064f2" fill-opacity="0.62"/><circle cx="861.7" cy="445.5" r="4.4" fill="#b064f2" fill-opacity="0.62"/><circle cx="776.5" cy="455.4" r="4.4" fill="#b064f2" fill-opacity="0.62"/><circle cx="804" cy="457.5" r="4.4" fill="#b064f2" fill-opacity="0.62"/><circle cx="803.6" cy="458.6" r="4.4" fill="#b064f2" fill-opacity="0.62"/><circle cx="786.8" cy="467.7" r="4.4" fill="#b064f2" fill-opacity="0.62"/><circle cx="804" cy="469.8" r="4.4" fill="#b064f2" fill-opacity="0.62"/><circle cx="769.2" cy="481.1" r="4.4" fill="#b064f2" fill-opacity="0.62"/><circle cx="804" cy="485" r="4.4" fill="#b064f2" fill-opacity="0.62"/><circle cx="804" cy="494" r="4.4" fill="#b064f2" fill-opacity="0.62"/><circle cx="808.5" cy="495.6" r="4.4" fill="#b064f2" fill-opacity="0.62"/><circle cx="804" cy="499.5" r="4.4" fill="#b064f2" fill-opacity="0.62"/><circle cx="809" cy="498.7" r="4.4" fill="#b064f2" fill-opacity="0.62"/><circle cx="816.7" cy="498.4" r="4.4" fill="#b064f2" fill-opacity="0.62"/><circle cx="821" cy="504" r="4.4" fill="#b064f2" fill-opacity="0.62"/><circle cx="819.4" cy="506.7" r="4.4" fill="#b064f2" fill-opacity="0.62"/><circle cx="790.7" cy="502.6" r="4.4" fill="#b064f2" fill-opacity="0.62"/><circle cx="804" cy="511.9" r="4.4" fill="#b064f2" fill-opacity="0.62"/><circle cx="819.4" cy="517" r="4.4" fill="#b064f2" fill-opacity="0.62"/><circle cx="797.1" cy="521.7" r="4.4" fill="#b064f2" fill-opacity="0.62"/><circle cx="788.1" cy="527" r="4.4" fill="#b064f2" fill-opacity="0.62"/><circle cx="754.3" cy="526" r="4.4" fill="#b064f2" fill-opacity="0.62"/><circle cx="838.4" cy="527" r="4.4" fill="#b064f2" fill-opacity="0.62"/><circle cx="848" cy="521.7" r="4.4" fill="#b064f2" fill-opacity="0.62"/><circle cx="854" cy="526" r="4.4" fill="#b064f2" fill-opacity="0.62"/><circle cx="846" cy="544" r="4.4" fill="#b064f2" fill-opacity="0.62"/><circle cx="804.8" cy="568.5" r="4.4" fill="#b064f2" fill-opacity="0.62"/><circle cx="804.5" cy="572.5" r="4.4" fill="#b064f2" fill-opacity="0.62"/><circle cx="729.1" cy="481.2" r="6" fill="#d29cf6" stroke="#1e1428" stroke-width="1.6"/><circle cx="803.8" cy="353.6" r="6" fill="#d29cf6" stroke="#1e1428" stroke-width="1.6"/><circle cx="829.7" cy="499.5" r="6" fill="#d29cf6" stroke="#1e1428" stroke-width="1.6"/><text x="804" y="330.8" font-size="10.5" font-weight="bold" font-style="italic" fill="#1a1a1a" text-anchor="middle" textLength="27" lengthAdjust="spacingAndGlyphs">Fastest</text><text x="804" y="341" font-size="10.5" font-weight="bold" font-style="italic" fill="#1a1a1a" text-anchor="middle" textLength="12.5" lengthAdjust="spacingAndGlyphs">run</text><text x="729.5" y="458.8" font-size="10.5" font-weight="bold" font-style="italic" fill="#1a1a1a" text-anchor="middle" textLength="33" lengthAdjust="spacingAndGlyphs">Shortest</text><text x="729.5" y="468.6" font-size="10.5" font-weight="bold" font-style="italic" fill="#1a1a1a" text-anchor="middle" textLength="12.5" lengthAdjust="spacingAndGlyphs">run</text><text x="830" y="466.2" font-size="10.5" font-weight="bold" font-style="italic" fill="#1a1a1a" text-anchor="middle" textLength="18" lengthAdjust="spacingAndGlyphs">Most</text><text x="830" y="477.3" font-size="10.5" font-weight="bold" font-style="italic" fill="#1a1a1a" text-anchor="middle" textLength="31" lengthAdjust="spacingAndGlyphs">Average</text><text x="830" y="487.6" font-size="10.5" font-weight="bold" font-style="italic" fill="#1a1a1a" text-anchor="middle" textLength="12.5" lengthAdjust="spacingAndGlyphs">run</text><rect x="80.9" y="228.9" width="501.1" height="123.7" fill="none" stroke="#4f82ee" stroke-width="1"/><rect x="78.9" y="226.9" width="4" height="4" fill="#4f82ee"/><rect x="580" y="226.9" width="4" height="4" fill="#4f82ee"/><rect x="78.9" y="350.6" width="4" height="4" fill="#4f82ee"/><rect x="580" y="350.6" width="4" height="4" fill="#4f82ee"/></g></svg>
<!-- panel -->
<div class="a" style="left:880px;top:66px;width:320px;height:4px;background:#393939"></div>
<div class="a" style="left:880px;top:69px;width:320px;height:26px;background:#424242"></div>
<div class="a" style="left:880px;top:70px;width:81px;height:25px;background:#535353"></div>
<div class="a" style="left:879px;top:95px;width:1.5px;height:535px;background:#767676"></div>
<div class="a" style="left:880.5px;top:95px;width:319.5px;height:535px;background:#f2f3f8"></div>
<div class="a" style="left:889px;top:95px;width:301px;height:535px;background:#fff;border-left:1px solid #e2e3e9"></div>
<!-- panel content -->
<svg style="left:0;top:0" width="1200" height="630" font-family="Liberation Sans"><defs><linearGradient id="pg1" x1="0" x2="1"><stop offset="0" stop-color="#e6d6fb"/><stop offset="1" stop-color="#8d25ea"/></linearGradient></defs><text x="888.7" y="84.3" font-size="10.5" font-weight="bold" font-style="normal" fill="#e6e6e6" text-anchor="start" textLength="65" lengthAdjust="spacingAndGlyphs">Datylon Editor</text><path d="M1188 79 L1190.5 81.7 L1188 84.4 M1192 79 L1194.5 81.7 L1192 84.4" stroke="#bdbdbd" stroke-width="0.9" fill="none"/><rect x="903.7" y="112" width="12" height="5.7" fill="#aed0f2"/><rect x="903.9" y="113.9" width="7.8" height="1.9" fill="#3b8ae6"/><rect x="913.3" y="112.3" width="1" height="5.2" fill="#3b8ae6"/><text x="924.2" y="117.8" font-size="10.5" font-weight="bold" font-style="normal" fill="#3d4350" text-anchor="start" textLength="97.5" lengthAdjust="spacingAndGlyphs">Bullet Total Distance</text><rect x="1074.2" y="105.3" width="64.5" height="17.2" rx="3.5" fill="#e8e9ee"/><text x="1078.7" y="117.8" font-size="10.5" font-weight="normal" font-style="normal" fill="#545966" text-anchor="start" textLength="56" lengthAdjust="spacingAndGlyphs">Select chart</text><rect x="1146.2" y="105.3" width="30.5" height="17.2" rx="3.5" fill="#e8e9ee"/><text x="1151.3" y="117.8" font-size="10.5" font-weight="normal" font-style="normal" fill="#545966" text-anchor="start" textLength="21.2" lengthAdjust="spacingAndGlyphs">Help</text><rect x="890" y="133.3" width="300" height="1" fill="#e6e7ec"/><rect x="1090" y="134.3" width="100" height="30" fill="#f2f5fb"/><rect x="1090" y="163.6" width="100" height="2" fill="#5b9be6"/><text x="923.7" y="154.7" font-size="10.5" font-weight="normal" font-style="normal" fill="#545966" text-anchor="start" textLength="33.3" lengthAdjust="spacingAndGlyphs">Binding</text><text x="1015.4" y="154.7" font-size="10.5" font-weight="normal" font-style="normal" fill="#545966" text-anchor="start" textLength="49.2" lengthAdjust="spacingAndGlyphs">Formatting</text><text x="1124.5" y="154.7" font-size="10.5" font-weight="bold" font-style="normal" fill="#3f87e2" text-anchor="start" textLength="31.3" lengthAdjust="spacingAndGlyphs">Styling</text><rect x="890" y="165" width="200" height="1" fill="#e6e7ec"/><path d="M907 179.5 L902.5 183.3 L907 187" stroke="#3a3f4a" stroke-width="1.6" fill="none"/><text x="1032" y="186.7" font-size="11" font-weight="normal" font-style="normal" fill="#4a4f5b" text-anchor="start" textLength="16.6" lengthAdjust="spacingAndGlyphs">Bar</text><rect x="890" y="196" width="300" height="1" fill="#e6e7ec"/><text x="900.8" y="215.8" font-size="10.5" font-weight="normal" font-style="normal" fill="#545966" text-anchor="start" textLength="77.5" lengthAdjust="spacingAndGlyphs">Chart Orientation</text><rect x="998.8" y="205.2" width="78.7" height="16.5" rx="3" fill="#e7e8ed" stroke="#a3a5ad" stroke-width="0.9"/><path d="M1033 213.4 H1043.5 M1035 211.4 L1033 213.4 L1035 215.4 M1041.5 211.4 L1043.5 213.4 L1041.5 215.4" stroke="#3a3f4a" stroke-width="1.1" fill="none"/><rect x="1082.5" y="204.7" width="79.2" height="17" rx="3" fill="#e9eaef"/><path d="M1121.7 207.5 V218.7 M1119.7 209.5 L1121.7 207.5 L1123.7 209.5 M1119.7 216.7 L1121.7 218.7 L1123.7 216.7" stroke="#3a3f4a" stroke-width="1.1" fill="none"/><text x="900.8" y="240.3" font-size="10.5" font-weight="normal" font-style="normal" fill="#545966" text-anchor="start" textLength="24.2" lengthAdjust="spacingAndGlyphs">Color</text><rect x="998.8" y="229.7" width="34.5" height="16.6" rx="3.5" fill="#fff" stroke="#e2d8f0" stroke-width="1"/><rect x="1000.3" y="231" width="31.4" height="13.7" rx="3" fill="url(#pg1)"/><text x="900.8" y="265.0" font-size="10.5" font-weight="normal" font-style="normal" fill="#545966" text-anchor="start" textLength="29" lengthAdjust="spacingAndGlyphs">Stroke</text><rect x="998.8" y="254.7" width="34.5" height="16.6" rx="3" fill="#fff" stroke="#c9cad0" stroke-width="0.9"/><path d="M1000.5 269.5 L1031.5 256.5" stroke="#e0303c" stroke-width="0.9"/><rect x="1043" y="254.7" width="109.5" height="16.6" rx="3" fill="#fff" stroke="#c9cad0" stroke-width="0.9"/><text x="1046.7" y="267.2" font-size="10.5" font-weight="normal" font-style="normal" fill="#333" text-anchor="start" textLength="25.8" lengthAdjust="spacingAndGlyphs">0.0px</text><rect x="1161" y="254" width="19" height="17.7" rx="3" fill="#e9eaef"/><g transform="translate(1170.5 262.8)" fill="none" stroke="#555a66" stroke-width="1"><path d="M-1 -5.2 H1 L1.4 -3.8 L2.7 -3.1 L4 -3.7 L5 -2 L4 -0.9 V0.9 L5 2 L4 3.7 L2.7 3.1 L1.4 3.8 L1 5.2 H-1 L-1.4 3.8 L-2.7 3.1 L-4 3.7 L-5 2 L-4 0.9 V-0.9 L-5 -2 L-4 -3.7 L-2.7 -3.1 L-1.4 -3.8 Z"/><circle r="1.8"/></g><text x="1004.7" y="284.2" font-size="10.5" font-weight="normal" font-style="normal" fill="#545966" text-anchor="start" textLength="22.3" lengthAdjust="spacingAndGlyphs">Color</text><text x="1083" y="285" font-size="10.5" font-weight="normal" font-style="normal" fill="#545966" text-anchor="start" textLength="29.5" lengthAdjust="spacingAndGlyphs">Weight</text><text x="900.8" y="310.2" font-size="10.5" font-weight="normal" font-style="normal" fill="#545966" text-anchor="start" textLength="44.5" lengthAdjust="spacingAndGlyphs">Horizontal</text><text x="900.8" y="321.9" font-size="10.5" font-weight="normal" font-style="normal" fill="#545966" text-anchor="start" textLength="42.5" lengthAdjust="spacingAndGlyphs">Rounding</text><rect x="998.95" y="300.75" width="180.00" height="15.90" rx="3" fill="#fff" stroke="#c9cad0" stroke-width="0.9"/><text x="1002.6" y="312.6" font-size="10.5" font-weight="normal" font-style="normal" fill="#333" text-anchor="start">12.0px</text><text x="900.8" y="342.8" font-size="10.5" font-weight="normal" font-style="normal" fill="#545966" text-anchor="start" textLength="78" lengthAdjust="spacingAndGlyphs">Vertical Rounding</text><rect x="998.95" y="332.45" width="180.00" height="16.60" rx="3" fill="#fff" stroke="#c9cad0" stroke-width="0.9"/><text x="1002.6" y="344.65" font-size="10.5" font-weight="normal" font-style="normal" fill="#333" text-anchor="start">12.0px</text><text x="900.8" y="367.3" font-size="10.5" font-weight="normal" font-style="normal" fill="#545966" text-anchor="start" textLength="81.5" lengthAdjust="spacingAndGlyphs">Round All Corners</text><rect x="998.5" y="358.4" width="10.2" height="10.1" rx="2.5" fill="#d6d7dd"/><rect x="890" y="377" width="300" height="26.5" fill="#f3f4f8"/><rect x="890" y="377" width="300" height="1" fill="#e3e4e9"/><rect x="890" y="403" width="300" height="1" fill="#e3e4e9"/><text x="900.8" y="392.6" font-size="8" font-weight="bold" font-style="normal" fill="#5a5f6b" text-anchor="start" textLength="16.8" lengthAdjust="spacingAndGlyphs">SIZE</text><rect x="1071.3" y="382.2" width="49" height="16.1" rx="3" fill="#e2e3e9" stroke="#a3a5ad" stroke-width="0.9"/><text x="1077.2" y="393.6" font-size="10.5" font-weight="normal" font-style="normal" fill="#545966" text-anchor="start" textLength="37.5" lengthAdjust="spacingAndGlyphs">Relative</text><rect x="1125.4" y="381.8" width="54" height="16.9" rx="3" fill="#e6e7ec"/><text x="1131.5" y="393.6" font-size="10.5" font-weight="normal" font-style="normal" fill="#545966" text-anchor="start" textLength="41" lengthAdjust="spacingAndGlyphs">Absolute</text><text x="900.8" y="421.3" font-size="10.5" font-weight="normal" font-style="normal" fill="#545966" text-anchor="start" textLength="26" lengthAdjust="spacingAndGlyphs">Width</text><rect x="998.95" y="410.84999999999997" width="180.00" height="16.50" rx="3" fill="#fff" stroke="#c9cad0" stroke-width="0.9"/><text x="1002.6" y="423.0" font-size="10.5" font-weight="normal" font-style="normal" fill="#333" text-anchor="start">41%</text><rect x="890" y="436" width="300" height="25.7" fill="#f3f4f8"/><rect x="890" y="436" width="300" height="1" fill="#e3e4e9"/><rect x="890" y="461.3" width="300" height="1" fill="#e3e4e9"/><text x="900.8" y="452" font-size="8" font-weight="bold" font-style="normal" fill="#5a5f6b" text-anchor="start" textLength="28.9" lengthAdjust="spacingAndGlyphs">LABELS</text><path d="M1162.5 449.5 C1165 445.3 1172 445.3 1174.5 449.5 C1172 453.7 1165 453.7 1162.5 449.5 Z" fill="none" stroke="#5a5f6b" stroke-width="1.1"/><circle cx="1168.5" cy="449.5" r="1.9" fill="none" stroke="#5a5f6b" stroke-width="1"/><path d="M1163 444.5 L1175 454.5" stroke="#5a5f6b" stroke-width="1.1"/><text x="900.8" y="479.6" font-size="10.5" font-weight="normal" font-style="normal" fill="#8e939d" text-anchor="start" textLength="58.5" lengthAdjust="spacingAndGlyphs">Anchor Point</text><rect x="998.95" y="469.15" width="180.00" height="16.90" rx="3" fill="#eeeff3"/><text x="1002.6" y="481.5" font-size="10.5" font-weight="normal" font-style="normal" fill="#8e939d" text-anchor="start">End</text><path d="M1166.8 476 H1171.6 L1169.2 479 Z" fill="#6a6f7b"/><text x="900.8" y="503.4" font-size="10.5" font-weight="normal" font-style="normal" fill="#8e939d" text-anchor="start" textLength="44.5" lengthAdjust="spacingAndGlyphs">Horizontal</text><text x="900.8" y="515.1" font-size="10.5" font-weight="normal" font-style="normal" fill="#8e939d" text-anchor="start" textLength="45" lengthAdjust="spacingAndGlyphs">Alignment</text><rect x="998.95" y="494.84999999999997" width="25.10" height="15.60" rx="3" fill="#eceef2" stroke="#b4b6bd" stroke-width="0.9"/><rect x="1029.3" y="494.4" width="25.70" height="16.50" rx="3" fill="#eef0f4"/><rect x="1060.4" y="494.4" width="26.00" height="16.50" rx="3" fill="#eef0f4"/><g stroke="#7d828d" stroke-width="0.9" fill="none"><circle cx="1007.2" cy="502.6" r="1.3"/><path d="M1008.5 502.6 H1016 M1013.8 500.3 L1016 502.6 L1013.8 504.9"/><circle cx="1042.2" cy="502.6" r="1.3"/><path d="M1036.5 502.6 H1040.9 M1043.5 502.6 H1048 M1038.5 500.5 L1036.5 502.6 L1038.5 504.7 M1046 500.5 L1048 502.6 L1046 504.7"/><circle cx="1077.5" cy="502.6" r="1.3"/><path d="M1069 502.6 H1076.2 M1071.2 500.3 L1069 502.6 L1071.2 504.9"/></g><text x="900.8" y="536.7" font-size="10.5" font-weight="normal" font-style="normal" fill="#8e939d" text-anchor="start" textLength="80" lengthAdjust="spacingAndGlyphs">Vertical Alignment</text><rect x="998.5" y="525.8" width="26.00" height="16.80" rx="3" fill="#eef0f4"/><rect x="1029.75" y="526.25" width="24.80" height="15.90" rx="3" fill="#eceef2" stroke="#b4b6bd" stroke-width="0.9"/><rect x="1060.4" y="525.8" width="26.00" height="16.80" rx="3" fill="#eef0f4"/><g stroke="#7d828d" stroke-width="0.9" fill="none"><circle cx="1011.5" cy="529.5" r="1.3"/><path d="M1011.5 530.8 V538.5 M1009.3 536.3 L1011.5 538.5 L1013.7 536.3"/><circle cx="1042.2" cy="534.2" r="1.3"/><path d="M1042.2 528.5 V532.9 M1042.2 535.5 V540 M1040.1 530.6 L1042.2 528.5 L1044.3 530.6 M1040.1 537.9 L1042.2 540 L1044.3 537.9"/><circle cx="1073.4" cy="539" r="1.3"/><path d="M1073.4 529.5 V537.7 M1071.2 531.7 L1073.4 529.5 L1075.6 531.7"/></g><text x="900.8" y="561.1" font-size="10.5" font-weight="normal" font-style="normal" fill="#8e939d" text-anchor="start" textLength="76.5" lengthAdjust="spacingAndGlyphs">Horizontal Offset</text><rect x="998.95" y="551.0500000000001" width="180.00" height="15.60" rx="3" fill="#fff" stroke="#c9cad0" stroke-width="0.9"/><text x="1002.6" y="562.75" font-size="10.5" font-weight="normal" font-style="normal" fill="#333" text-anchor="start">0.0px</text><text x="900.8" y="585.8" font-size="10.5" font-weight="normal" font-style="normal" fill="#8e939d" text-anchor="start" textLength="64" lengthAdjust="spacingAndGlyphs">Vertical Offset</text><rect x="998.95" y="575.75" width="180.00" height="15.60" rx="3" fill="#fff" stroke="#c9cad0" stroke-width="0.9"/><text x="1002.6" y="587.4499999999999" font-size="10.5" font-weight="normal" font-style="normal" fill="#333" text-anchor="start">0.0px</text><text x="900.8" y="610.6" font-size="10.5" font-weight="normal" font-style="normal" fill="#8e939d" text-anchor="start" textLength="38" lengthAdjust="spacingAndGlyphs">Rotation</text><rect x="998.95" y="600.85" width="180.00" height="15.90" rx="3" fill="#fff" stroke="#c9cad0" stroke-width="0.9"/><text x="1002.6" y="612.6999999999999" font-size="10.5" font-weight="normal" font-style="normal" fill="#333" text-anchor="start">0°</text><text x="900.8" y="635.3" font-size="10.5" font-weight="normal" font-style="normal" fill="#8e939d" text-anchor="start">Prefix</text><rect x="998.95" y="625.45" width="180.00" height="24.10" rx="3" fill="#fff" stroke="#c9cad0" stroke-width="0.9"/><text x="1002.6" y="641.4" font-size="10.5" font-weight="normal" font-style="normal" fill="#333" text-anchor="start"></text><path d="M883.5 422.5 L886.5 425.7 L883.5 429" stroke="#555" stroke-width="1.2" fill="none"/></svg>
</body></html>
